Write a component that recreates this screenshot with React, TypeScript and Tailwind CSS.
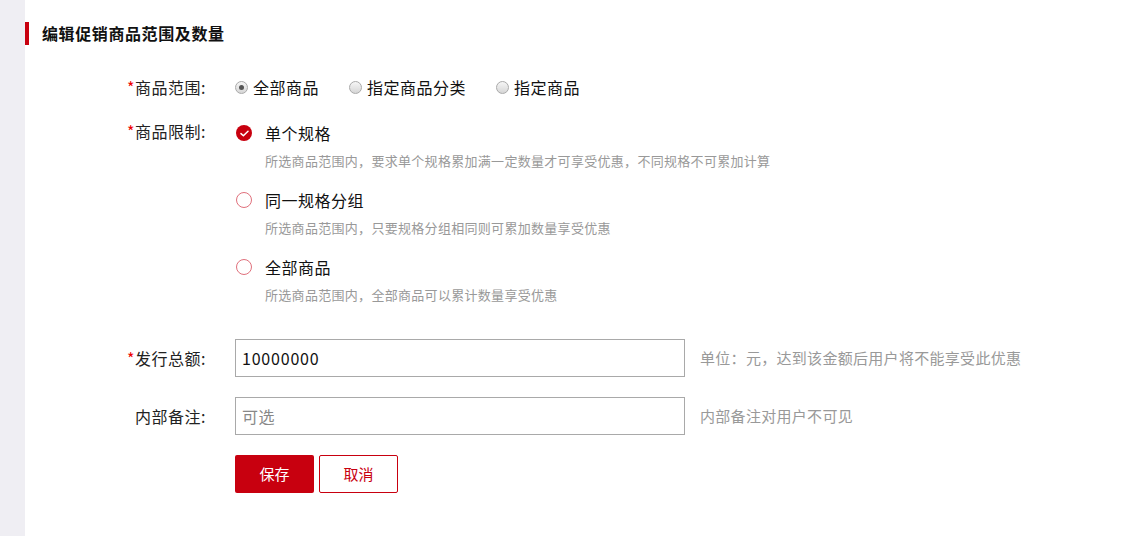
import React from "react";

const font = { fontFamily: '"Noto Sans CJK SC", "Noto Sans", sans-serif' };

function GrayRadio({ checked }: { checked?: boolean }) {
  return (
    <span className="flex h-[13px] w-[13px] items-center justify-center rounded-full border border-[#aaaaaa] bg-gradient-to-b from-[#f6f6f6] to-[#d6d6d6]">
      {checked && <span className="h-[5px] w-[5px] rounded-full bg-[#555]" />}
    </span>
  );
}

function RedRadio({ checked }: { checked?: boolean }) {
  if (checked)
    return (
      <span className="flex h-[16px] w-[16px] items-center justify-center rounded-full bg-[#c8000f]">
        <svg width="9" height="7" viewBox="0 0 9 7" fill="none">
          <path d="M1 3.6 L3.4 5.8 L8 1.2" stroke="white" strokeWidth="1.5" strokeLinecap="round" strokeLinejoin="round" />
        </svg>
      </span>
    );
  return <span className="h-[16px] w-[16px] rounded-full border-[1.5px] border-[#e0707c] bg-white" />;
}

function Label({ text, required }: { text: string; required?: boolean }) {
  return (
    <div className="w-[206px] shrink-0 text-right text-[16px] leading-[24px] tracking-[0.5px] text-[#222]">
      {required && <span className="text-[#e00]">*</span>}
      {text}
    </div>
  );
}

const options = [
  { title: "单个规格", desc: "所选商品范围内，要求单个规格累加满一定数量才可享受优惠，不同规格不可累加计算", checked: true },
  { title: "同一规格分组", desc: "所选商品范围内，只要规格分组相同则可累加数量享受优惠" },
  { title: "全部商品", desc: "所选商品范围内，全部商品可以累计数量享受优惠" },
];

export default function App() {
  return (
    <div className="flex min-h-[536px] w-full bg-white" style={font}>
      <div className="w-[25px] shrink-0 bg-[#efeef3]" />
      <div className="flex-1">
        <div className="mt-[22px] flex items-center">
          <div className="h-[23px] w-[4px] bg-[#c8000f]" />
          <div className="pl-[13px] text-[16px] font-bold leading-[23px] tracking-[0.6px] text-[#111]">编辑促销商品范围及数量</div>
        </div>

        <div className="ml-[-25px] mt-[30px] flex">
          <Label text="商品范围:" required />
          <div className="ml-[29px] flex items-center text-[16px] leading-[24px] tracking-[0.5px] text-[#111]">
            <div className="flex items-center">
              <GrayRadio checked />
              <span className="ml-[5px]">全部商品</span>
            </div>
            <div className="ml-[30px] flex items-center">
              <GrayRadio />
              <span className="ml-[5px]">指定商品分类</span>
            </div>
            <div className="ml-[30px] flex items-center">
              <GrayRadio />
              <span className="ml-[5px]">指定商品</span>
            </div>
          </div>
        </div>

        <div className="ml-[-25px] mt-[19px] flex">
          <div className="pt-[1px]">
            <Label text="商品限制:" required />
          </div>
          <div className="ml-[30px] flex flex-col gap-[17px] pt-[3px]">
            {options.map((o) => (
              <div key={o.title}>
                <div className="flex items-center text-[16px] leading-[24px] tracking-[0.5px] text-[#111]">
                  <RedRadio checked={o.checked} />
                  <span className="ml-[13px]">{o.title}</span>
                </div>
                <div className="ml-[29px] mt-[6px] text-[13px] leading-[20px] tracking-[0.3px] text-[#999]">{o.desc}</div>
              </div>
            ))}
          </div>
        </div>

        <div className="ml-[-25px] mt-[34px] flex items-center">
          <Label text="发行总额:" required />
          <input
            className="ml-[29px] h-[38px] w-[450px] border border-[#a9a9a9] px-[6px] text-[16px] tracking-[0.8px] text-[#111] outline-none"
            defaultValue="10000000"
            style={font}
          />
          <span className="ml-[15px] text-[15px] tracking-[0.3px] text-[#999]">单位：元，达到该金额后用户将不能享受此优惠</span>
        </div>

        <div className="ml-[-25px] mt-[20px] flex items-center">
          <Label text="内部备注:" />
          <input
            className="ml-[29px] h-[38px] w-[450px] border border-[#a9a9a9] px-[6px] text-[16px] tracking-[0.5px] text-[#111] outline-none placeholder:text-[#888]"
            placeholder="可选"
            style={font}
          />
          <span className="ml-[15px] text-[15px] tracking-[0.3px] text-[#999]">内部备注对用户不可见</span>
        </div>

        <div className="ml-[210px] mt-[20px] flex gap-[5px]">
          <button className="h-[38px] w-[79px] rounded-[2px] bg-[#c8000f] text-[15px] text-white">保存</button>
          <button className="h-[38px] w-[79px] rounded-[2px] border border-[#c8000f] bg-white text-[15px] text-[#c8000f]">取消</button>
        </div>
      </div>
    </div>
  );
}
